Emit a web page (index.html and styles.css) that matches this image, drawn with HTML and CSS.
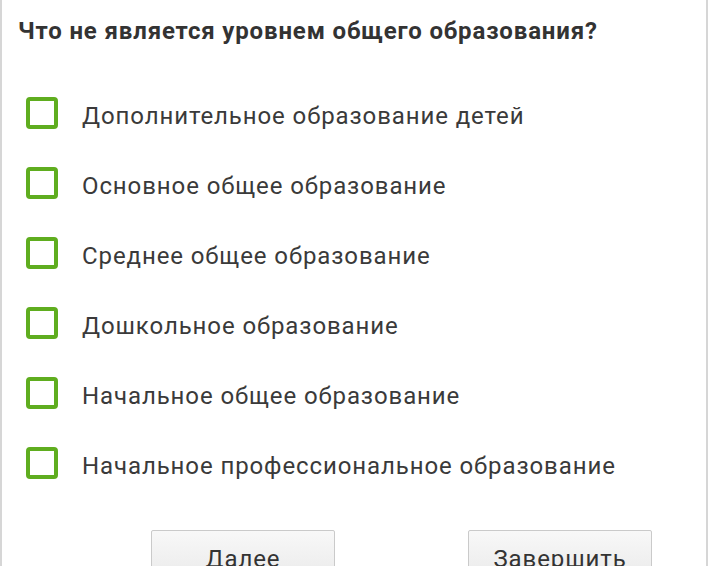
FILE: index.html
```html
<!DOCTYPE html>
<html lang="ru">
<head>
    <meta charset="UTF-8">
    <meta name="viewport" content="width=device-width, initial-scale=1.0">
    <title>Тест</title>
    <link rel="stylesheet" href="styles.css">
</head>
<body>
    <div class="quiz">
        <h1 class="question">Что не является уровнем общего образования?</h1>
        <div class="answers">
            <label class="answer"><input class="check" type="checkbox" name="a1"><span class="answer-text">Дополнительное образование детей</span></label>
            <label class="answer"><input class="check" type="checkbox" name="a2"><span class="answer-text">Основное общее образование</span></label>
            <label class="answer"><input class="check" type="checkbox" name="a3"><span class="answer-text">Среднее общее образование</span></label>
            <label class="answer"><input class="check" type="checkbox" name="a4"><span class="answer-text">Дошкольное образование</span></label>
            <label class="answer"><input class="check" type="checkbox" name="a5"><span class="answer-text">Начальное общее образование</span></label>
            <label class="answer"><input class="check" type="checkbox" name="a6"><span class="answer-text">Начальное профессиональное образование</span></label>
        </div>
        <div class="button-row">
            <button class="button">Далее</button>
            <button class="button">Завершить</button>
        </div>
    </div>
</body>
</html>
```

FILE: styles.css
```css
html, body {
    margin: 0;
    padding: 0;
    background: #fff;
}
body {
    font-family: Roboto, "Noto Sans", sans-serif;
    color: #333;
}
.quiz {
    width: 708px;
    height: 566px;
    box-sizing: border-box;
    border-left: 2px solid #d6d6d6;
    border-right: 2px solid #d6d6d6;
    overflow: hidden;
}
.question {
    margin: 0;
    padding: 16px 0 0 16px;
    font-size: 24px;
    font-weight: bold;
    letter-spacing: 0.85px;
    line-height: 30px;
    color: #333;
}
.answers {
    padding: 50px 0 0 24px;
}
.answer {
    display: flex;
    align-items: center;
    height: 70px;
    margin-top: -18px;
    margin-bottom: 18px;
    font-size: 24px;
    letter-spacing: 0.9px;
    color: #3a3a3a;
}
.answer-text {
    padding-top: 5px;
}
.check {
    appearance: none;
    width: 32px;
    height: 32px;
    margin: 0 24px 0 0;
    box-sizing: border-box;
    border: 4px solid #5fad1f;
    border-radius: 4px;
    background: #fff;
}
.button-row {
    display: flex;
    gap: 133px;
    padding: 14px 0 0 149px;
}
.button {
    width: 184px;
    height: 48px;
    font-family: inherit;
    font-size: 24px;
    letter-spacing: 0.9px;
    color: #333;
    border: 1px solid #cacaca;
    border-radius: 2px;
    background: linear-gradient(#f8f8f8, #ebebeb);
    padding: 10px 0 0;
}
```
